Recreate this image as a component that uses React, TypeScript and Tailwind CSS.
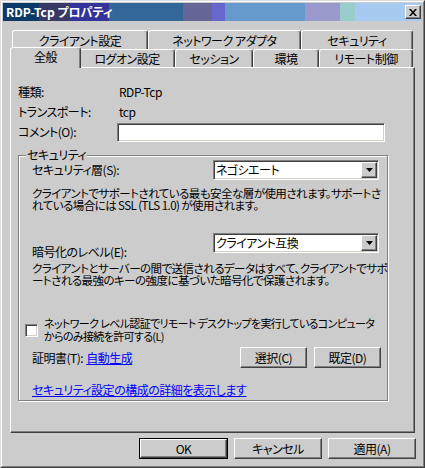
import React from 'react';

const raised =
  'border border-t-white border-l-white border-r-[#404040] border-b-[#404040] shadow-[inset_-1px_-1px_0_#808080]';
const sunken =
  'border border-t-[#808080] border-l-[#808080] border-r-white border-b-white shadow-[inset_1px_1px_0_#404040,inset_-1px_-1px_0_#d4d0c8]';

const backTabs = [
  { label: 'クライアント設定', w: 'w-[136px]' },
  { label: 'ネットワーク アダプタ', w: 'w-[153px]' },
  { label: 'セキュリティ', w: 'w-[112px]' },
];

const frontTabs = [
  { label: 'ログオン設定', w: 'w-[96px]' },
  { label: 'セッション', w: 'w-[78px]' },
  { label: '環境', w: 'w-[66px]' },
  { label: 'リモート制御', w: 'w-[94px]' },
];

const Tab: React.FC<{ label: string; className: string }> = ({ label, className }) => (
  <div
    className={`flex shrink-0 justify-center rounded-t-[3px] border-l border-t border-l-white border-t-white border-r border-r-[#404040] shadow-[inset_-1px_0_0_#808080] ${className}`}
  >
    {label}
  </div>
);

const Combo: React.FC<{ value: string }> = ({ value }) => (
  <div className={`flex h-[20px] w-[166px] shrink-0 items-center bg-white ${sunken} p-[1px]`}>
    <span className="flex-1 pl-[1px] leading-[16px]">{value}</span>
    <div className={`flex h-[16px] w-[16px] items-center justify-center bg-[#cccccc] ${raised}`}>
      <svg width="7" height="4" viewBox="0 0 7 4">
        <path d="M0 0h7L3.5 4z" fill="#000" />
      </svg>
    </div>
  </div>
);

const Button: React.FC<{ label: string; w: string; isDefault?: boolean }> = ({ label, w, isDefault }) => (
  <div className={`${w} h-[21px] shrink-0 ${isDefault ? 'border border-black' : ''}`}>
    <div className={`flex h-full w-full items-center justify-center bg-[#cccccc] ${raised}`}>{label}</div>
  </div>
);

const App: React.FC = () => {
  return (
    <div className="h-[468px] w-[425px] border border-t-[#dcdcdc] border-l-[#dcdcdc] border-r-[#404040] border-b-[#404040] bg-[#cccccc] font-['Noto_Sans_CJK_JP',sans-serif] text-[12px] leading-[12px] tracking-[-0.5px] text-black [font-feature-settings:'palt']">
      <div className="h-full w-full border border-t-white border-l-white border-r-[#808080] border-b-[#808080] p-[1px]">
        {/* title bar */}
        <div className="flex h-[18px] items-center bg-[linear-gradient(to_right,#0b3a66_0px,#0b3a66_36px,#393966_36px,#393966_66px,#333399_66px,#333399_106px,#336699_106px,#336699_180px,#666699_180px,#666699_209px,#6666cc_209px,#6666cc_222px,#6699cc_222px,#6699cc_302px,#9999cc_302px,#9999cc_337px,#99cccc_337px,#99cccc_352px,#a6caf0_352px,#a6caf0_100%)] pl-[3px] pr-[1px]">
          <span className="flex-1 font-bold tracking-normal text-white">RDP-Tcp プロパティ</span>
          <div className={`flex h-[14px] w-[16px] items-center justify-center bg-[#cccccc] ${raised}`}>
            <svg width="8" height="7" viewBox="0 0 8 7">
              <path d="M0 0h2l2 2.5L6 0h2L5 3.5 8 7H6L4 4.5 2 7H0l3-3.5z" fill="#000" />
            </svg>
          </div>
        </div>

        <div className="pl-[7px] pr-[6px] pt-[9px]">
          {/* tabs */}
          <div className="ml-[2px] flex h-[19px]">
            {backTabs.map((t) => (
              <Tab key={t.label} label={t.label} className={`${t.w} h-[19px] pt-[4px]`} />
            ))}
          </div>
          <div className="ml-[2px] flex h-[18px] items-start">
            <Tab label="全般" className="relative z-10 -mx-[2px] -mt-[2px] h-[21px] w-[71px] bg-[#cccccc] pt-[3px]" />
            {frontTabs.map((t) => (
              <Tab key={t.label} label={t.label} className={`${t.w} h-[18px] pt-[3px]`} />
            ))}
          </div>

          {/* panel */}
          <div className="h-[366px] w-[405px] border border-t-white border-l-white border-r-[#404040] border-b-[#404040] pl-[7px] pt-[14px] shadow-[inset_-1px_-1px_0_#808080]">
            <div className="flex h-[20px] items-center">
              <span className="w-[101px]">種類:</span>
              <span>RDP-Tcp</span>
            </div>
            <div className="flex h-[20px] items-center">
              <span className="w-[101px]">トランスポート:</span>
              <span>tcp</span>
            </div>
            <div className="flex h-[20px] items-center">
              <span className="w-[99px]">コメント(O):</span>
              <div className={`h-[19px] w-[268px] bg-white ${sunken}`} />
            </div>

            {/* security group */}
            <div className="mt-[13px] h-[246px] w-[370px] border border-[#808080] shadow-[inset_1px_1px_0_white,1px_1px_0_white]">
              <div className="-mt-[7px] mb-[-1px] ml-[7px] h-[12px] w-fit bg-[#cccccc] px-[1px]">セキュリティ</div>

              <div className="flex h-[20px] items-center pl-[13px]">
                <span className="w-[181px]">セキュリティ層(S):</span>
                <Combo value="ネゴシエート" />
              </div>
              <p className="mt-[7px] whitespace-nowrap pl-[13px] text-[11.5px] tracking-[-0.55px]">
                クライアントでサポートされている最も安全な層が使用されます。サポートさ
                <br />
                れている場合には SSL (TLS 1.0) が使用されます。
              </p>

              <div className="mt-[22px] flex items-start pl-[13px]">
                <span className="mt-[13px] w-[181px]">暗号化のレベル(E):</span>
                <Combo value="クライアント互換" />
              </div>
              <p className="mt-[4px] whitespace-nowrap pl-[13px] text-[11.5px] tracking-[-0.55px]">
                クライアントとサーバーの間で送信されるデータはすべて、クライアントでサポ
                <br />
                ートされる最強のキーの強度に基づいた暗号化で保護されます。
              </p>

              <div className="mt-[31px] flex items-center gap-[6px] pl-[6px]">
                <div className={`h-[13px] w-[13px] shrink-0 bg-white ${sunken}`} />
                <p className="whitespace-nowrap text-[11px] leading-[13px] tracking-[-0.65px]">
                  ネットワーク レベル認証でリモート デスクトップを実行しているコンピュータ
                  <br />
                  からのみ接続を許可する(L)
                </p>
              </div>

              <div className="mt-[4px] flex items-center pl-[13px] pr-[6px]">
                <span>証明書(T):</span>
                <span className="ml-[3px] flex-1 text-[#0000ff] underline">自動生成</span>
                <div className="flex gap-[7px]">
                  <Button label="選択(C)" w="w-[67px]" />
                  <Button label="既定(D)" w="w-[67px]" />
                </div>
              </div>

              <div className="mt-[16px] pl-[13px] text-[#0000ff] underline">
                セキュリティ設定の構成の詳細を表示します
              </div>
            </div>
          </div>

          {/* dialog buttons */}
          <div className="mt-[5px] flex justify-end gap-[6px]">
            <Button label="OK" w="w-[89px]" isDefault />
            <Button label="キャンセル" w="w-[88px]" />
            <Button label="適用(A)" w="w-[88px]" />
          </div>
        </div>
      </div>
    </div>
  );
};

export default App;
